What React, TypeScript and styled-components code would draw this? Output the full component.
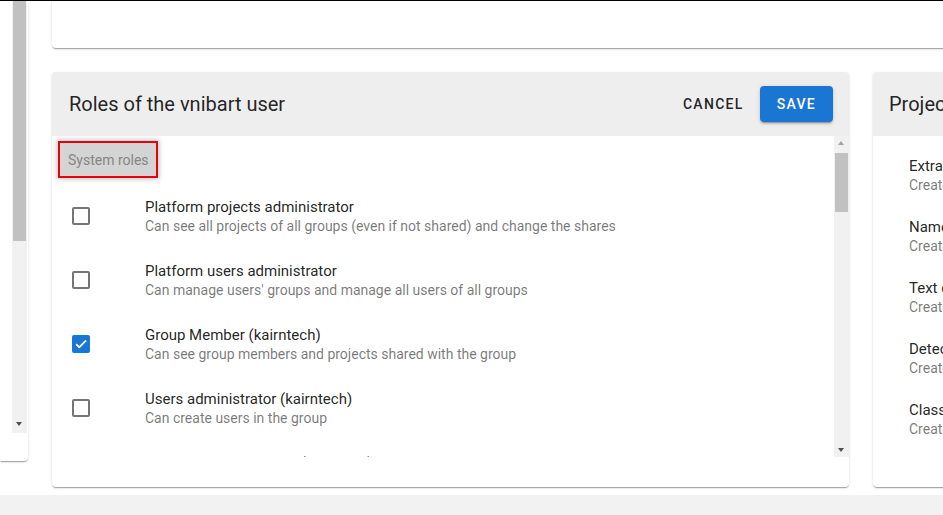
import React from "react";
import styled, { createGlobalStyle } from "styled-components";

const Global = createGlobalStyle`
  html, body { margin: 0; padding: 0; }
  body { font-family: Roboto, "Noto Sans", Arial, sans-serif; background: #fff; }
  * { box-sizing: border-box; }
`;

const Page = styled.div`
  width: 943px;
  height: 515px;
  overflow: hidden;
  border-top: 1px solid #000;
  display: flex;
  flex-direction: column;
  background: #fff;
`;

const Main = styled.div`
  flex: 1;
  display: flex;
  align-items: flex-start;
  gap: 24px;
  min-height: 0;
`;

const Footer = styled.div`
  height: 20px;
  background: #f2f2f2;
  flex-shrink: 0;
`;

const paperShadow = `box-shadow: 0 2px 1px -1px rgba(0,0,0,0.2), 0 1px 1px 0 rgba(0,0,0,0.14), 0 1px 3px 0 rgba(0,0,0,0.12);`;

const LeftCard = styled.div`
  width: 28px;
  height: 460px;
  flex-shrink: 0;
  background: #fff;
  border-radius: 0 0 4px 0;
  ${paperShadow}
  display: flex;
  justify-content: flex-end;
  padding-right: 1px;
`;

const Track = styled.div<{ $h: number }>`
  width: 15px;
  height: ${(p) => p.$h}px;
  background: #f1f1f1;
  position: relative;
  flex-shrink: 0;
`;

const Thumb = styled.div<{ $top: number; $h: number }>`
  position: absolute;
  left: 1px;
  right: 1px;
  top: ${(p) => p.$top}px;
  height: ${(p) => p.$h}px;
  background: #c1c1c1;
`;

const Arrow = styled.div<{ $dir: "up" | "down"; $pos: number; $color: string }>`
  position: absolute;
  left: 4px;
  width: 0;
  height: 0;
  border-left: 3.5px solid transparent;
  border-right: 3.5px solid transparent;
  ${(p) =>
    p.$dir === "up"
      ? `top: ${p.$pos}px; border-bottom: 4px solid ${p.$color};`
      : `bottom: ${p.$pos}px; border-top: 4px solid ${p.$color};`}
`;

const Column = styled.div`
  flex: 1;
  display: flex;
  flex-direction: column;
  gap: 24px;
  min-width: 0;
`;

const TopCard = styled.div`
  height: 47px;
  width: 960px;
  background: #fff;
  border-radius: 0 0 0 4px;
  ${paperShadow}
`;

const CardsRow = styled.div`
  display: flex;
  gap: 24px;
  height: 415px;
`;

const Card = styled.div<{ $w: number }>`
  width: ${(p) => p.$w}px;
  flex-shrink: 0;
  background: #fff;
  border-radius: 4px;
  ${paperShadow}
  display: flex;
  flex-direction: column;
  overflow: hidden;
`;

const CardHeader = styled.div<{ $pl: number }>`
  height: 64px;
  flex-shrink: 0;
  background: #eeeeee;
  display: flex;
  align-items: center;
  padding: 0 16px 0 ${(p) => p.$pl}px;
`;

const CardTitle = styled.h2`
  margin: 0;
  flex: 1;
  font-size: 20px;
  font-weight: 400;
  color: rgba(0, 0, 0, 0.87);
  white-space: nowrap;
`;

const Actions = styled.div`
  display: flex;
  align-items: center;
  gap: 8px;
`;

const Button = styled.button<{ $primary?: boolean }>`
  font-family: Roboto, sans-serif;
  font-size: 14px;
  font-weight: 500;
  letter-spacing: 1.3px;
  text-transform: uppercase;
  height: 36px;
  border: none;
  border-radius: 4px;
  padding: 0 ${(p) => (p.$primary ? "17px" : "8px")};
  cursor: pointer;
  color: ${(p) => (p.$primary ? "#fff" : "rgba(0,0,0,0.87)")};
  background: ${(p) => (p.$primary ? "#1976d2" : "transparent")};
  ${(p) =>
    p.$primary
      ? "box-shadow: 0 3px 1px -2px rgba(0,0,0,0.2), 0 2px 2px 0 rgba(0,0,0,0.14), 0 1px 5px 0 rgba(0,0,0,0.12);"
      : ""}
`;

const CardBody = styled.div`
  flex: 1;
  min-height: 0;
  display: flex;
  flex-direction: column;
  padding-bottom: 30px;
`;

const ScrollArea = styled.div`
  flex: 1;
  display: flex;
  min-height: 0;
  overflow: hidden;
`;

const ListArea = styled.div`
  flex: 1;
  overflow: hidden;
  padding: 5px 0 0 6px;
`;

const Subheader = styled.div`
  display: inline-flex;
  align-items: center;
  height: 37px;
  padding: 0 7px 0 8px;
  font-size: 14px;
  color: #858585;
  background: #d4d4d4;
  border: 2px solid #e8000b;
  box-shadow: 0 0 5px 1px rgba(0, 0, 0, 0.25);
`;

const RoleList = styled.ul`
  list-style: none;
  margin: 6px 0 0 -6px;
  padding: 0;
`;

const RoleRow = styled.li`
  height: 64px;
  display: flex;
  align-items: center;
  padding-left: 20px;
`;

const Box = styled.span<{ $checked?: boolean }>`
  width: 18px;
  height: 18px;
  flex-shrink: 0;
  border-radius: 2px;
  border: 2px solid ${(p) => (p.$checked ? "#1976d2" : "#757575")};
  background: ${(p) => (p.$checked ? "#1976d2" : "transparent")};
  display: flex;
  align-items: center;
  justify-content: center;
  margin-right: 55px;
`;

const Texts = styled.div`
  display: flex;
  flex-direction: column;
  white-space: nowrap;
`;

const Primary = styled.span`
  font-size: 15px;
  line-height: 20px;
  color: rgba(0, 0, 0, 0.87);
`;

const Secondary = styled.span`
  font-size: 14px;
  line-height: 18px;
  color: rgba(0, 0, 0, 0.54);
`;

const ProjList = styled.ul`
  list-style: none;
  margin: 0;
  padding: 8px 0 0 36px;
`;

const ProjRow = styled.li`
  height: 61px;
  display: flex;
  align-items: center;
`;

const roles = [
  {
    t: "Platform projects administrator",
    d: "Can see all projects of all groups (even if not shared) and change the shares",
    c: false,
  },
  {
    t: "Platform users administrator",
    d: "Can manage users' groups and manage all users of all groups",
    c: false,
  },
  {
    t: "Group Member (kairntech)",
    d: "Can see group members and projects shared with the group",
    c: true,
  },
  {
    t: "Users administrator (kairntech)",
    d: "Can create users in the group",
    c: false,
  },
  {
    t: "Data projects manager (kairntech)",
    d: "Can create data projects in the group",
    c: false,
  },
];

const projects = [
  ["Extraction", "Create extraction projects"],
  ["Named entities", "Create named entities projects"],
  ["Text classification", "Create text classification projects"],
  ["Detection", "Create detection projects"],
  ["Classification", "Create classification projects"],
];

const Check = () => (
  <svg width="16" height="16" viewBox="0 0 24 24">
    <path d="M9 16.17 4.83 12l-1.42 1.41L9 19 21 7l-1.41-1.41z" fill="#fff" stroke="#fff" strokeWidth="1.5" />
  </svg>
);

export default function App() {
  return (
    <Page>
      <Global />
      <Main>
        <LeftCard>
          <Track $h={432}>
            <Thumb $top={0} $h={240} />
            <Arrow $dir="down" $pos={7} $color="#505050" />
          </Track>
        </LeftCard>
        <Column>
          <TopCard />
          <CardsRow>
            <Card $w={797}>
              <CardHeader $pl={17}>
                <CardTitle>Roles of the vnibart user</CardTitle>
                <Actions>
                  <Button>Cancel</Button>
                  <Button $primary>Save</Button>
                </Actions>
              </CardHeader>
              <CardBody>
                <ScrollArea>
                  <ListArea>
                    <Subheader>System roles</Subheader>
                    <RoleList>
                      {roles.map((r) => (
                        <RoleRow key={r.t}>
                          <Box $checked={r.c}>{r.c && <Check />}</Box>
                          <Texts>
                            <Primary>{r.t}</Primary>
                            <Secondary>{r.d}</Secondary>
                          </Texts>
                        </RoleRow>
                      ))}
                    </RoleList>
                  </ListArea>
                  <Track $h={321}>
                    <Arrow $dir="up" $pos={5} $color="#a3a3a3" />
                    <Thumb $top={17} $h={59} />
                    <Arrow $dir="down" $pos={5} $color="#505050" />
                  </Track>
                </ScrollArea>
              </CardBody>
            </Card>
            <Card $w={300}>
              <CardHeader $pl={16}>
                <CardTitle>Projects</CardTitle>
              </CardHeader>
              <ProjList>
                {projects.map(([t, d]) => (
                  <ProjRow key={t}>
                    <Texts>
                      <Primary>{t}</Primary>
                      <Secondary>{d}</Secondary>
                    </Texts>
                  </ProjRow>
                ))}
              </ProjList>
            </Card>
          </CardsRow>
        </Column>
      </Main>
      <Footer />
    </Page>
  );
}
